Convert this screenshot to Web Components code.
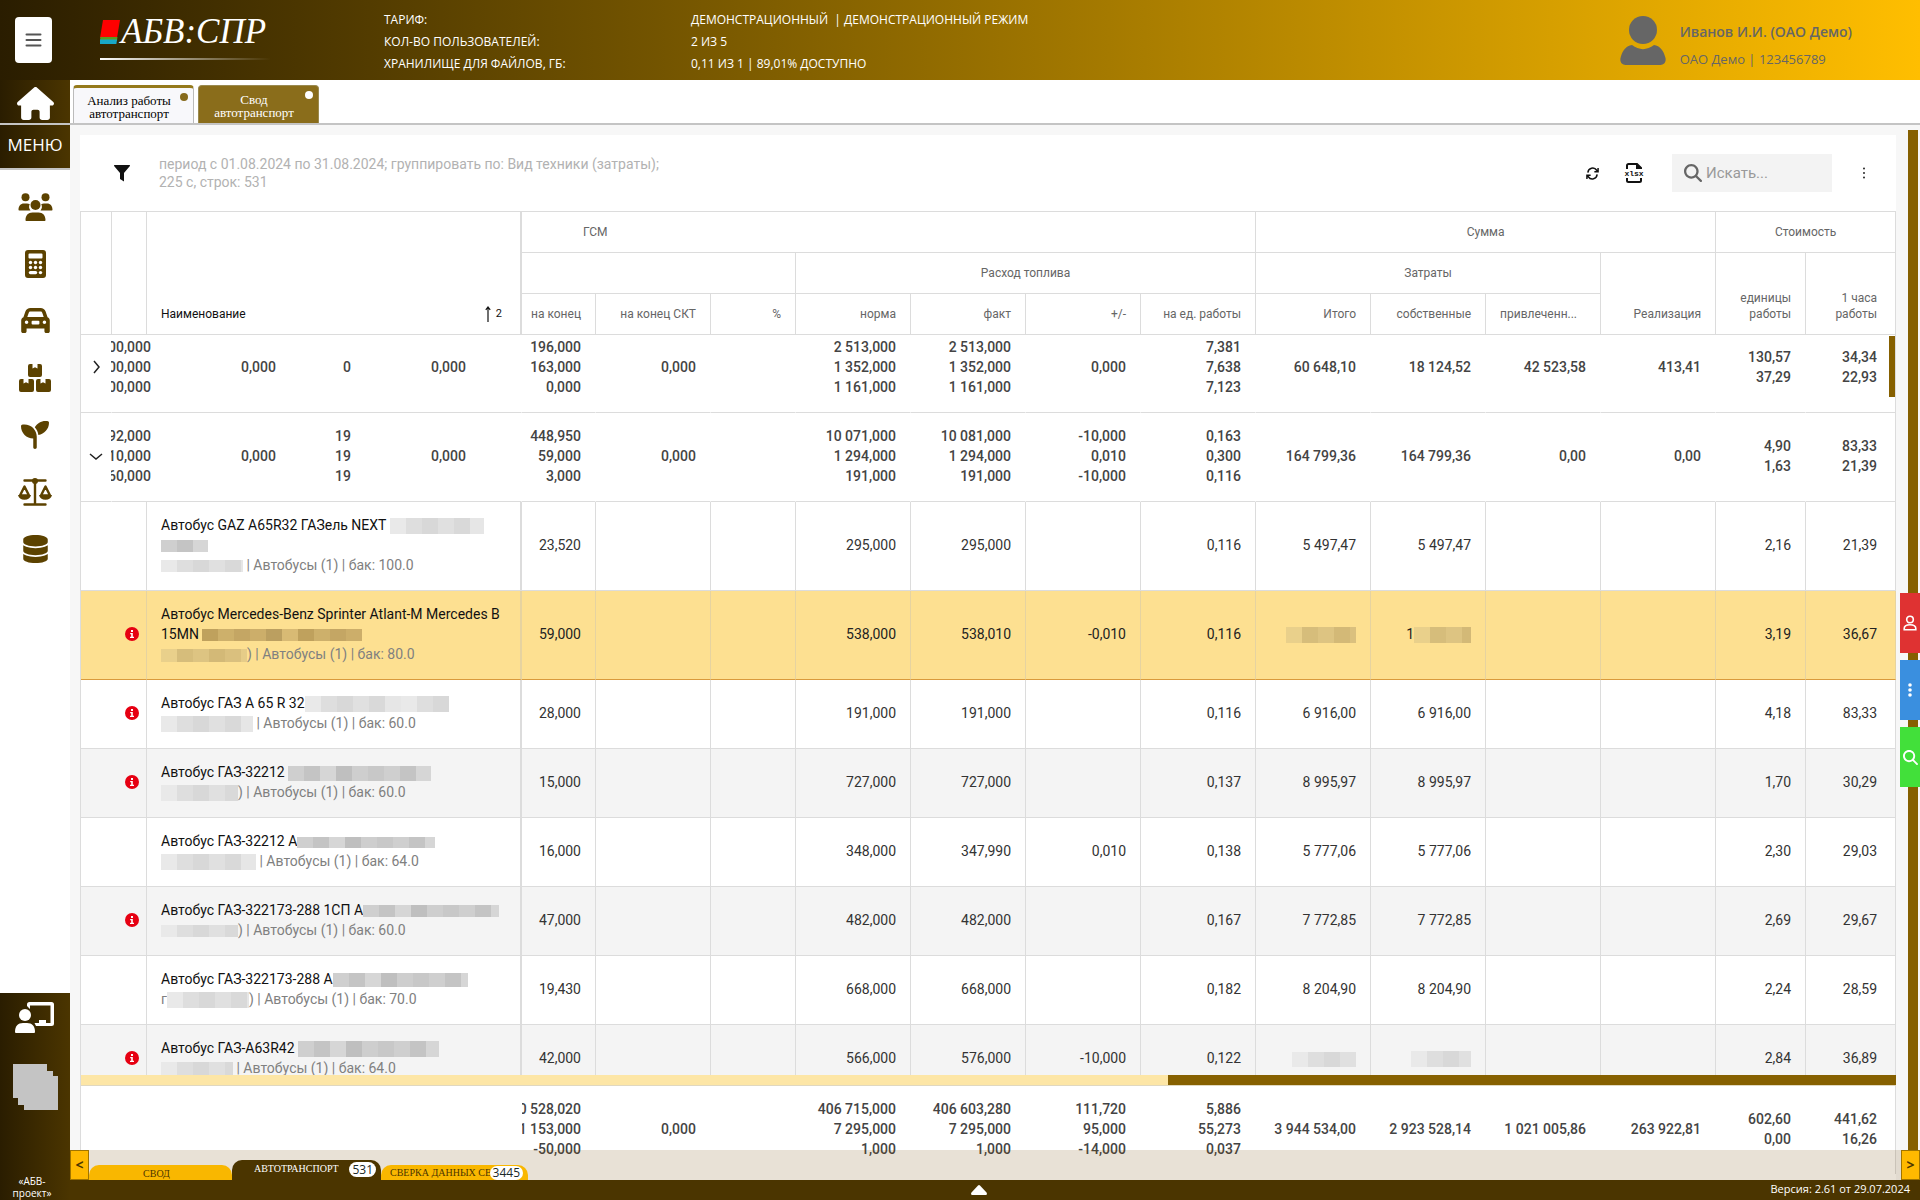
<!DOCTYPE html>
<html lang="ru">
<head>
<meta charset="utf-8">
<title>АБВ:СПР</title>
<style>
html,body{margin:0;height:100%}
body{font-family:Roboto,"Noto Sans",sans-serif;color:#333;background:#fff;overflow:hidden}
</style>
</head>
<body>
<app-shell>
  <app-header slot="header"></app-header>
  <side-bar slot="side"></side-bar>
  <page-tabs slot="tabs"></page-tabs>
  <report-card slot="content"></report-card>
  <sheet-tabs slot="sheets"></sheet-tabs>
  <status-bar slot="status"></status-bar>
  <quick-actions slot="actions"></quick-actions>
</app-shell>
<script>
const BASE = ':host,*{box-sizing:border-box}button{font:inherit;color:inherit;border:0;padding:0;margin:0;background:none;cursor:pointer}a{color:inherit;text-decoration:none}';
const element = (name, css, html, ready) => customElements.define(name, class extends HTMLElement {
  constructor() {
    super();
    const root = this.attachShadow({ mode: 'open' });
    root.innerHTML = `<style>${BASE}${css}</style>${html}`;
    if (ready) ready(root, this);
  }
});

const ICONS = {
  home: ['0 0 576 512', '<path d="M575.8 255.5c0 18-15 32.1-32 32.1h-32l.7 160.2V472c0 22.1-17.9 40-40 40H392c-22.1 0-40-17.9-40-40V384c0-17.7-14.3-32-32-32H256c-17.7 0-32 14.3-32 32v88c0 22.1-17.9 40-40 40H104c-22.1 0-40-17.9-40-40V287.6H32c-18 0-32-14-32-32.1c0-9 3-17 10-24L266.4 8c7-7 15-8 22-8s15 2 21 7L564.8 231.5c8 7 12 15 11 24z"/>'],
  people: ['0 0 34 28', '<circle cx="7" cy="4.200" r="4"/><circle cx="27" cy="4.200" r="4"/><circle cx="17" cy="12" r="5"/><path d="M0 17c0-4 2-6.500 5.500-6.500h3c1 0 2 .3 2.800.8C10 13.500 10.500 15.500 12 17.500H.7c-.4 0-.7-.2-.7-.5zM34 17c0-4-2-6.500-5.500-6.500h-3c-1 0-2 .3-2.800.8 1.300 2.200.8 4.200-.7 6.200h11.300c.4 0 .7-.2.7-.5zM7 27c0-4.500 2.500-7.500 7-7.500h6c4.500 0 7 3 7 7.500 0 .6-.4 1-1 1H8c-.6 0-1-.4-1-1z"/>'],
  calc: ['0 0 21 28', '<path fill-rule="evenodd" d="M3 0h15a3 3 0 0 1 3 3v22a3 3 0 0 1-3 3H3a3 3 0 0 1-3-3V3a3 3 0 0 1 3-3zM4.500 3.500a1 1 0 0 0-1 1v3a1 1 0 0 0 1 1h12a1 1 0 0 0 1-1v-3a1 1 0 0 0-1-1z"/><g fill="#fff"><circle cx="5.500" cy="12.500" r="1.700"/><circle cx="10.500" cy="12.500" r="1.700"/><circle cx="15.500" cy="12.500" r="1.700"/><circle cx="5.500" cy="17.500" r="1.700"/><circle cx="10.500" cy="17.500" r="1.700"/><circle cx="15.500" cy="17.500" r="1.700"/><rect x="3.800" y="21" width="8.400" height="3.200" rx="1.600"/><circle cx="15.500" cy="22.600" r="1.700"/></g>'],
  car: ['0 32 512 448', '<path d="M135.200 117.400L109.100 192H402.900l-26.100-74.600C372.300 104.600 360.200 96 346.600 96H165.400c-13.600 0-25.700 8.600-30.200 21.400zM39.600 196.800L74.800 96.300C88.300 57.800 124.600 32 165.400 32H346.600c40.800 0 77.100 25.800 90.600 64.300l35.200 100.500c23.200 9.600 39.600 32.500 39.600 59.200V448c0 17.700-14.300 32-32 32H448c-17.700 0-32-14.300-32-32V400H96v48c0 17.700-14.300 32-32 32H32c-17.700 0-32-14.300-32-32V256c0-26.700 16.400-49.600 39.600-59.200zM128 288a32 32 0 1 0-64 0 32 32 0 1 0 64 0zm288 32a32 32 0 1 0 0-64 32 32 0 1 0 0 64z"/><rect x="186" y="262" width="140" height="66" rx="18" fill="#fff"/>'],
  boxes: ['0 0 32 28', '<path d="M11 0h2.500v4.500l2.500-1.200 2.500 1.200V0H21a2 2 0 0 1 2 2v9a2 2 0 0 1-2 2H11a2 2 0 0 1-2-2V2a2 2 0 0 1 2-2zM2 15h2.500v4.500L7 18.300l2.500 1.200V15H13a2 2 0 0 1 2 2v9a2 2 0 0 1-2 2H2a2 2 0 0 1-2-2v-9a2 2 0 0 1 2-2zM19 15h2.500v4.500l2.500-1.200 2.500 1.200V15H30a2 2 0 0 1 2 2v9a2 2 0 0 1-2 2H19a2 2 0 0 1-2-2v-9a2 2 0 0 1 2-2z"/>'],
  plant: ['0 0 512 512', '<path d="M512 32c0 113.600-84.600 207.500-194.200 222c-7.100-53.400-30.600-101.600-65.300-139.300C290.800 46.300 364 0 448 0h32c17.700 0 32 14.300 32 32zM0 96C0 78.300 14.300 64 32 64H64c123.700 0 224 100.300 224 224V480c0 17.700-14.300 32-32 32s-32-14.300-32-32V320C100.300 320 0 219.700 0 96z"/>'],
  scales: ['0 0 34 28', '<g fill="none" stroke="currentColor" stroke-width="2.400" stroke-linecap="round" stroke-linejoin="round"><path d="M6.500 2.500h21M17 3v23M6.500 26.500h21M6.500 8.500L2 17.500h9zM27.500 8.500L23 17.500h9z"/></g><circle cx="17" cy="3" r="3"/><path d="M0 17h13c-.6 3-3 4.800-6.500 4.800S.6 20 0 17zM21 17h13c-.6 3-3 4.800-6.500 4.800S21.600 20 21 17z"/>'],
  db: ['0 0 448 512', '<path d="M448 80v48c0 44.200-100.300 80-224 80S0 172.200 0 128V80C0 35.800 100.300 0 224 0S448 35.800 448 80zM393.200 214.700c20.800-7.400 39.900-16.900 54.800-28.600V288c0 44.200-100.300 80-224 80S0 332.200 0 288V186.100c14.900 11.800 34 21.200 54.800 28.600C99.700 230.700 159.500 240 224 240s124.300-9.300 169.200-25.300zM0 346.100c14.900 11.800 34 21.200 54.800 28.600C99.700 390.700 159.500 400 224 400s124.300-9.300 169.200-25.300c20.800-7.400 39.900-16.900 54.800-28.600V432c0 44.200-100.300 80-224 80S0 476.200 0 432V346.100z"/>'],
  teach: ['0 0 40 32', '<path d="M12 5V3.500A2.500 2.500 0 0 1 14.500 1h22A2.500 2.500 0 0 1 39 3.500v19a2.500 2.500 0 0 1-2.500 2.500H21l-1.500-3H24v-3h7v3h4.500V4.500H15V8z"/><circle cx="10" cy="14" r="6"/><path d="M0 31c0-6 3-9 8-9h4c5 0 8 3 8 9a1 1 0 0 1-1 1H1a1 1 0 0 1-1-1z"/>'],
  stack: ['0 0 45 46', '<path d="M0 0h34v7h6v5h5v34H11v-5H5v-7H0z"/>'],
  user: ['0 0 46 49', '<ellipse cx="23" cy="14" rx="14" ry="14"/><path d="M12 29c7 5.500 15 5.500 22 0 6 1 9.500 5 11.500 13 .8 4-1.500 7-5 7h-35c-3.500 0-5.800-3-5-7C2.500 34 6 30 12 29z"/>'],
  burger: ['0 0 16 14', '<path d="M1 1.500h14M1 7h14M1 12.500h14" stroke="currentColor" stroke-width="2" stroke-linecap="round"/>'],
  filter: ['0 0 16 17', '<path d="M.5 0h15c.5 0 .6.500.4.900L10 8v8.500L6 14V8L.1.900C-.1.500 0 0 .5 0z"/>'],
  refresh: ['0 0 14 14', '<path d="M2 6a5.200 5.200 0 0 1 9.500-2.500L13 5M12 8a5.200 5.200 0 0 1-9.500 2.500L1 9M13 1v4H9M1 13V9h4" fill="none" stroke="currentColor" stroke-width="1.600"/>'],
  xlsx: ['0 0 20 20', '<path d="M3 6V2.500A1.500 1.500 0 0 1 4.500 1H13l4 4v1M3 15v2.500A1.500 1.500 0 0 0 4.500 19h11a1.500 1.500 0 0 0 1.500-1.500V15M13 1v4h4" fill="none" stroke="currentColor" stroke-width="2"/><text x="10" y="13" text-anchor="middle" font-family="Liberation Mono" font-weight="700" font-size="8">xlsx</text>'],
  search: ['0 0 512 512', '<path d="M416 208c0 45.900-14.900 88.300-40 122.700L502.600 457.400c12.500 12.500 12.500 32.800 0 45.300s-32.800 12.500-45.300 0L330.700 376c-34.400 25.200-76.800 40-122.700 40C93.100 416 0 322.900 0 208S93.100 0 208 0S416 93.100 416 208zM208 352a144 144 0 1 0 0-288 144 144 0 1 0 0 288z"/>'],
  kebab: ['0 0 4 14', '<circle cx="2" cy="2.500" r=".9"/><circle cx="2" cy="7" r=".9"/><circle cx="2" cy="11.500" r=".9"/>'],
  dots: ['0 0 4 14', '<circle cx="2" cy="2" r="1.800"/><circle cx="2" cy="7" r="1.800"/><circle cx="2" cy="12" r="1.800"/>'],
  person: ['0 0 14 16', '<g fill="none" stroke="currentColor" stroke-width="1.600"><circle cx="7" cy="4.500" r="3.300"/><path d="M1.200 14.800v-1.300c0-2.500 1.800-3.700 5.800-3.700s5.800 1.200 5.800 3.700v1.300z"/></g>'],
  right: ['0 0 14 14', '<path d="M5 1l5 6-5 6" fill="none" stroke="currentColor" stroke-width="1.500"/>'],
  down: ['0 0 14 14', '<path d="M1 5l6 5 6-5" fill="none" stroke="currentColor" stroke-width="1.500"/>'],
  info: ['0 0 14 14', '<circle cx="7" cy="7" r="7"/><path d="M6 3h2v2H6zM5.200 6h2.600v3.700H9V11H5V9.700h1.200V7.200h-1z" fill="#fff"/>'],
  sort: ['0 0 6 16', '<path d="M3 16V2M.8 3.800L3 1l2.200 2.800" fill="none" stroke="currentColor" stroke-width="1.200"/>'],
  up: ['0 0 16 10', '<path d="M7 .5a1.500 1.500 0 0 1 2 0l6.500 7c.8 1 .4 2.500-1 2.500h-13C.1 10-.3 8.500.5 7.500z"/>'],
  logo: ['0 0 20 24', '<path d="M3 0h17l-3 18H0z" fill="#f00"/><path d="M.4 17h17l-.4 4H0z" fill="#5a9a20"/><path d="M0 19.500h17l-.6 4.500H0z" fill="#18a8c8"/>']
};
customElements.define('svg-icon', class extends HTMLElement {
  connectedCallback() {
    if (this.shadowRoot) return;
    const [box, body] = ICONS[this.getAttribute('name')];
    this.attachShadow({ mode: 'open' }).innerHTML =
      `<style>:host{display:inline-block;flex:none}svg{display:block;width:100%;height:100%;fill:currentColor}</style><svg viewBox="${box}" aria-hidden="true">${body}</svg>`;
    this.style.width = this.getAttribute('w') + 'px';
    this.style.height = this.getAttribute('h') + 'px';
  }
});
const icon = (n, w, h = w) => `<svg-icon name="${n}" w="${w}" h="${h}"></svg-icon>`;

/* A mosaic strip that hides private data inside a line of text. */
const TONES = {
  light: ['#e9e9e9', '#dedede', '#d8d8d8', '#e0e0e0', '#d9d9d9', '#e6e6e6'],
  dark: ['#cfcfcf', '#c4c4c4', '#d6d6d6', '#bfbfbf', '#cecece', '#c8c8c8'],
  sand: ['#e9d08b', '#d6bd7b', '#ddc482', '#d3b977', '#dac07e', '#e6cc88'],
  brown: ['#bfa15d', '#cdb06b', '#c4a664', '#ccae6a', '#bb9f60', '#d8ba74']
};
customElements.define('hidden-data', class extends HTMLElement {
  connectedCallback() {
    if (this.shadowRoot) return;
    const tones = TONES[this.getAttribute('tone') || 'light'];
    const stops = tones.map((c, i) => `${c} ${i * 16}px ${(i + 1) * 16}px`).join(',');
    this.attachShadow({ mode: 'open' }).innerHTML =
      `<style>:host{display:inline-block;vertical-align:middle;background:repeating-linear-gradient(90deg,${stops})}</style>`;
    this.style.width = this.getAttribute('w') + 'px';
    this.style.height = this.getAttribute('h') + 'px';
  }
});
const mask = (w, h, tone = 'light') => `<hidden-data w="${w}" h="${h}" tone="${tone}"></hidden-data>`;

element('app-shell', `
:host{display:grid;grid-template:80px 45px minmax(0,1fr) 20px / 70px minmax(0,1fr);height:100vh;position:relative}
.header{grid-area:1/1/2/3}.side{grid-area:2/1/5/2}.tabs{grid-area:2/2/3/3}
.main{grid-area:3/2/4/3;background:#f7f7f7;position:relative;display:flex;padding:10px 24px 0 10px;min-height:0}
.main ::slotted(report-card){flex:1;min-width:0}
.scroll{position:absolute;right:2px;top:5px;bottom:30px;width:10px;background:#866000}
.sheets{position:absolute;left:0;right:0;bottom:0}
.actions{position:absolute;right:0;top:468px}
.status{grid-area:4/2/5/3}`,
`<div class="header"><slot name="header"></slot></div>
<div class="side"><slot name="side"></slot></div>
<div class="tabs"><slot name="tabs"></slot></div>
<main class="main"><slot name="content"></slot><div class="scroll"></div><div class="sheets"><slot name="sheets"></slot></div><div class="actions"><slot name="actions"></slot></div></main>
<div class="status"><slot name="status"></slot></div>`);

element('app-header', `
:host{display:flex;height:80px;align-items:center;background:linear-gradient(90deg,#2a1d00,#ffbe00);color:#fff;font-family:"Open Sans","Noto Sans",sans-serif}
.burger{width:37px;height:46px;margin-left:15px;border-radius:4px;background:#fff;color:#555;display:flex;align-items:center;justify-content:center}
.logo{margin-left:48px;width:170px;height:48px;border-bottom:2px solid;border-image:linear-gradient(90deg,#fff,transparent) 1;display:flex;align-items:flex-start;gap:1px;margin-bottom:8px;padding-top:2px;font:italic 35px/36px "Liberation Serif",serif}
.logo svg-icon{margin-top:6px}
dl{margin:4px 0 0 114px;display:grid;grid-template-columns:307px auto;font-size:12px;line-height:22px;font-weight:500}
dd{margin:0;white-space:pre}
.user{margin-left:auto;margin-right:68px;display:flex;gap:14px;color:#666;align-items:center}
.user div{padding-top:10px}
.user b{display:block;font-size:14px;line-height:28px;font-weight:600}.user span{display:block;font-size:13px;line-height:26px}`,
`<button class="burger" aria-label="Меню">${icon('burger', 17, 14)}</button>
<a class="logo" href="#">${icon('logo', 20, 24)}АБВ:СПР</a>
<dl><dt>ТАРИФ:</dt><dd>ДЕМОНСТРАЦИОННЫЙ  | ДЕМОНСТРАЦИОННЫЙ РЕЖИМ</dd><dt>КОЛ-ВО ПОЛЬЗОВАТЕЛЕЙ:</dt><dd>2 ИЗ 5</dd><dt>ХРАНИЛИЩЕ ДЛЯ ФАЙЛОВ, ГБ:</dt><dd>0,11 ИЗ 1 | 89,01% ДОСТУПНО</dd></dl>
<div class="user">${icon('user', 46, 49)}<div><b>Иванов И.И. (ОАО Демо)</b><span>ОАО Демо | 123456789</span></div></div>`);

element('side-bar', `
:host{display:flex;flex-direction:column;height:100%;background:#fff;color:#5c4200;font-family:"Open Sans","Noto Sans",sans-serif;--dark:linear-gradient(90deg,#2a1d00,#4b3500)}
.home,.menu{background:var(--dark);color:#fff;border-bottom:2px solid #c4c4c4;display:flex;align-items:center;justify-content:center;flex:none}
.home{height:45px;padding-top:3px}.menu{height:45px;font-size:17px;padding-bottom:5px}
nav{display:flex;flex-direction:column;padding-top:8px}
nav a{height:57px;display:flex;align-items:center;justify-content:center}
.foot{margin-top:auto;height:207px;background:var(--dark);color:#fff;display:flex;flex-direction:column;align-items:center;padding-top:8px}
.foot button{display:flex;color:#c4c4c4;margin-top:31px}.foot button:first-child{color:#fff;margin:0}
.foot p{margin:auto 0 1px;font-size:10px;line-height:12px;text-align:center;padding-right:6px}`,
`<a class="home" href="#" aria-label="Главная">${icon('home', 37, 33)}</a>
<div class="menu">МЕНЮ</div>
<nav>${[['people', 35, 28, 'Персонал'], ['calc', 21, 28, 'Учёт'], ['car', 29, 25, 'Транспорт'], ['boxes', 32, 28, 'Склад'], ['plant', 28, 28, 'Растениеводство'], ['scales', 34, 28, 'Весовая'], ['db', 25, 28, 'Данные']].map(([n, w, h, t]) => `<a href="#" aria-label="${t}">${icon(n, w, h)}</a>`).join('')}</nav>
<div class="foot"><button aria-label="Обучение">${icon('teach', 40, 32)}</button><button aria-label="Окна">${icon('stack', 45, 46)}</button><p>«АБВ-<br>проект»</p></div>`);

element('page-tabs', `
:host{display:flex;gap:4px;height:45px;padding:5px 0 0 3px;background:#fff;border-bottom:2px solid #c4c4c4;font:13px/13px "Liberation Serif",serif}
button{width:121px;height:38px;border-radius:4px 4px 0 0;position:relative;padding:3px 9px 0 0;background:#f8f8fb;color:#000;border:1px solid #bbb;border-bottom:0;border-top:3px solid #957a1c}
button.on{background:#8a6d1b;color:#fff;border:1px solid #9a8a50;border-bottom:0}
i{position:absolute;right:5px;top:5px;width:8px;height:8px;border-radius:4px;background:#866a1c}
.on i{background:#fff}`,
`<button>Анализ работы<br>автотранспорт<i></i></button><button class="on">Свод<br>автотранспорт<i></i></button>`);

element('report-card', `
:host{display:flex;flex-direction:column;background:#fff;min-height:0}
.bar{height:76px;display:flex;align-items:center;color:#111;padding:0 30px 0 34px;flex:none}
p{margin:0 auto 0 29px;font-size:14px;line-height:18px;color:#b2b2b2}
button{display:flex}.x{margin:0 28px 0 25px}
label{width:160px;height:38px;background:#f3f3f3;display:flex;align-items:center;gap:4px;padding-left:12px;margin-right:30px;color:#666}
input{min-width:0;flex:1;border:0;background:none;font:15px Roboto,sans-serif;padding:0;outline:0}
input::placeholder{color:#999;opacity:1}
data-grid{flex:1;min-height:0}`,
`<div class="bar"><button aria-label="Фильтр">${icon('filter', 16, 17)}</button>
<p>период с 01.08.2024 по 31.08.2024; группировать по: Вид техники (затраты);<br>225 с, строк: 531</p>
<button aria-label="Обновить">${icon('refresh', 13)}</button><button class="x" aria-label="Выгрузить">${icon('xlsx', 20)}</button>
<label>${icon('search', 18)}<input type="text" placeholder="Искать..." aria-label="Поиск"></label><button aria-label="Ещё">${icon('kebab', 4, 14)}</button></div>
<data-grid></data-grid>`);

const WIDTHS = [31, 35, 375, 74, 115, 85, 115, 115, 115, 115, 115, 115, 115, 115, 90, 90];
const COLS = `<colgroup>${WIDTHS.map(w => `<col style="width:${w}px">`).join('')}</colgroup>`;
const lines = s => s.replace(/\//g, '<br>');
const cell = v => `<td>${v.startsWith('<') || v.includes('hidden') ? v : lines(v)}</td>`;
const nums = list => list.map(cell).join('');
const GROUPS = [
  { open: false, back: ['00,000/00,000/00,000', '0,000', '0', '0,000'], v: ['196,000/163,000/0,000', '0,000', '', '2 513,000/1 352,000/1 161,000', '2 513,000/1 352,000/1 161,000', '0,000', '7,381/7,638/7,123', '60 648,10', '18 124,52', '42 523,58', '413,41', '130,57/37,29', '34,34/22,93'] },
  { open: true, back: ['92,000/10,000/60,000', '0,000', '19/19/19', '0,000'], v: ['448,950/59,000/3,000', '0,000', '', '10 071,000/1 294,000/191,000', '10 081,000/1 294,000/191,000', '-10,000/0,010/-10,000', '0,163/0,300/0,116', '164 799,36', '164 799,36', '0,00', '0,00', '4,90/1,63', '83,33/21,39'] }
];
const ROWS = [
  { cls: 'tall', name: `Автобус GAZ A65R32 ГАЗель NEXT ${mask(94, 16)}<br>${mask(47, 12, 'dark')}`, sub: `${mask(82, 12)} | Автобусы (1) | бак: 100.0`, v: ['23,520', '', '', '295,000', '295,000', '', '0,116', '5 497,47', '5 497,47', '', '', '2,16', '21,39'] },
  { cls: 'tall sel', info: 1, name: `Автобус Mercedes-Benz Sprinter Atlant-M Mercedes B<br>15MN ${mask(160, 12, 'brown')}`, sub: `${mask(86, 13, 'sand')}) | Автобусы (1) | бак: 80.0`, v: ['59,000', '', '', '538,000', '538,010', '-0,010', '0,116', mask(70, 16, 'sand'), '1' + mask(57, 16, 'sand'), '', '', '3,19', '36,67'] },
  { info: 1, name: `Автобус ГАЗ А 65 R 32${mask(144, 16)}`, sub: `${mask(92, 16)} | Автобусы (1) | бак: 60.0`, v: ['28,000', '', '', '191,000', '191,000', '', '0,116', '6 916,00', '6 916,00', '', '', '4,18', '83,33'] },
  { cls: 'alt', info: 1, name: `Автобус ГАЗ-32212 ${mask(143, 15, 'dark')}`, sub: `${mask(77, 16)}) | Автобусы (1) | бак: 60.0`, v: ['15,000', '', '', '727,000', '727,000', '', '0,137', '8 995,97', '8 995,97', '', '', '1,70', '30,29'] },
  { name: `Автобус ГАЗ-32212 А${mask(138, 11, 'dark')}`, sub: `${mask(95, 16)} | Автобусы (1) | бак: 64.0`, v: ['16,000', '', '', '348,000', '347,990', '0,010', '0,138', '5 777,06', '5 777,06', '', '', '2,30', '29,03'] },
  { cls: 'alt', info: 1, name: `Автобус ГАЗ-322173-288 1СП А${mask(136, 12, 'dark')}`, sub: `${mask(77, 12)}) | Автобусы (1) | бак: 60.0`, v: ['47,000', '', '', '482,000', '482,000', '', '0,167', '7 772,85', '7 772,85', '', '', '2,69', '29,67'] },
  { name: `Автобус ГАЗ-322173-288 А${mask(135, 14, 'dark')}`, sub: `г${mask(82, 16)}) | Автобусы (1) | бак: 70.0`, v: ['19,430', '', '', '668,000', '668,000', '', '0,182', '8 204,90', '8 204,90', '', '', '2,24', '28,59'] },
  { cls: 'alt', info: 1, name: `Автобус ГАЗ-А63R42 ${mask(141, 16, 'dark')}`, sub: `${mask(72, 15)} | Автобусы (1) | бак: 64.0`, v: ['42,000', '', '', '566,000', '576,000', '-10,000', '0,122', mask(64, 15), mask(60, 16), '', '', '2,84', '36,89'] }
];
const TOTAL = ['0 528,020/1 153,000/-50,000', '0,000', '', '406 715,000/7 295,000/1,000', '406 603,280/7 295,000/1,000', '111,720/95,000/-14,000', '5,886/55,273/0,037', '3 944 534,00', '2 923 528,14', '1 021 005,86', '263 922,81', '602,60/0,00', '441,62/16,26'];

element('data-grid', `
:host{display:flex;flex-direction:column;border-left:1px solid #dcdcdc;font-size:14px;line-height:20px;padding-bottom:6px}
table{width:100%;table-layout:fixed;border-collapse:separate;border-spacing:0;flex:none}
.head{border-top:1px solid #dcdcdc;font-size:12px;line-height:16px;color:#666}
th{height:41px;font-weight:400;padding:0 14px 12px 0;vertical-align:bottom;text-align:right;border-right:1px solid #dcdcdc;border-bottom:1px solid #dcdcdc;white-space:nowrap}
th.c{text-align:center;padding-right:0}th.gsm{text-align:left;padding-left:61px}th.cut{text-align:left;padding:0 0 12px 14px}
th.name{text-align:left;color:#111;padding-left:14px;border-right-width:2px;white-space:normal}
th.name div{display:flex;justify-content:space-between;align-items:center}th.name span{display:flex;align-items:center;gap:5px;padding-right:4px;font-size:11px}
th.last{padding-right:18px}
.view{flex:1;min-height:0;overflow:hidden;position:relative}
td{height:69px;padding:0 14px 2px 0;text-align:right;border-right:1px solid #dcdcdc;border-bottom:1px solid #dcdcdc;vertical-align:middle;white-space:nowrap}
td:last-child{padding-right:18px}
.tall td,.group td{height:89px}
.group td{border-right-color:transparent;font-weight:500;color:#444}.group td:last-child{border-right-color:#dcdcdc}
.alt td{background:#f4f4f4}
.sel td{background:#fde091;border-bottom-color:#d99a3c;color:#222;border-right-color:#e6d3a0}
td.i,.sel td.i{color:#e60012;padding-right:7px}td.i svg-icon,td.t svg-icon{display:block;margin-left:auto}
.group td.t{padding-right:8px;color:#222}
td.n{text-align:left;padding:0 0 2px 14px;color:#111;border-right-width:2px}td.n small{display:block;font-size:14px;color:#808080}
td.b{padding:0 0 2px}td.b div{display:grid;grid-template-columns:53px 125px 75px 115px;align-items:center}td.b span{overflow:hidden;display:flex;justify-content:flex-end;padding-right:14px}
td.b span:first-child{margin-left:-1px}
.thumb{position:absolute;right:1px;top:1px;width:6px;height:61px;background:#866000}
.hs{height:11px;flex:none;background:#fde6a6;border-bottom:1px solid #e0d8c0;display:flex;justify-content:flex-end}.hs i{width:728px;background:#866000}
.total td{height:88px;border:0;border-right:1px solid transparent;font-weight:500;color:#444;overflow:hidden}
.total td div{display:flex;justify-content:flex-end}
.total td:last-child{border-right-color:#dcdcdc}`,
`<table class="head">${COLS}<thead>
<tr><th rowspan="3"></th><th rowspan="3"></th><th rowspan="3" class="name"><div>Наименование<span>${icon('sort', 6, 16)}2</span></div></th><th colspan="7" class="gsm">ГСМ</th><th colspan="4" class="c">Сумма</th><th colspan="2" class="c">Стоимость</th></tr>
<tr><th colspan="3"></th><th colspan="4" class="c">Расход топлива</th><th colspan="3" class="c">Затраты</th><th rowspan="2">Реализация</th><th rowspan="2">единицы<br>работы</th><th rowspan="2" class="last">1 часа<br>работы</th></tr>
<tr><th>на конец</th><th>на конец СКТ</th><th>%</th><th>норма</th><th>факт</th><th>+/-</th><th>на ед. работы</th><th>Итого</th><th>собственные</th><th class="cut">привлеченн...</th></tr></thead></table>
<div class="view"><table>${COLS}<tbody>
${GROUPS.map(g => `<tr class="group"><td class="t">${icon(g.open ? 'down' : 'right', 14)}</td><td class="b" colspan="2"><div>${g.back.map(b => `<span>${lines(b)}</span>`).join('')}</div></td>${nums(g.v)}</tr>`).join('')}
${ROWS.map(r => `<tr class="${r.cls || ''}"><td class="i" colspan="2">${r.info ? icon('info', 14) : ''}</td><td class="n">${r.name}<small>${r.sub}</small></td>${nums(r.v)}</tr>`).join('')}
</tbody></table></div>
<div class="hs"><i></i></div>
<table class="total">${COLS}<tbody><tr><td></td><td></td><td></td>${TOTAL.map(v => `<td><div>${lines(v)}</div></td>`).join('')}</tr></tbody></table>`,
root => {
  const view = root.querySelector('.view');
  const thumb = document.createElement('div');
  thumb.className = 'thumb';
  view.append(thumb);
  requestAnimationFrame(() => { view.scrollTop = 11; thumb.style.top = view.scrollTop + 1 + 'px'; });
});

element('sheet-tabs', `
:host{display:flex;height:30px;align-items:flex-end;background:rgba(111,67,0,.16);font:10px/20px "Liberation Serif",serif;color:#4b3500}
.nav{width:19px;height:30px;background:#ffb900;border:1px solid #a07400;font:700 14px/26px "Open Sans",sans-serif}
.nav:last-child{margin-left:auto}
.tab{height:15px;background:#f9b700;border-radius:10px 10px 0 0;width:147px;line-height:15px;white-space:nowrap;display:flex;justify-content:space-between;padding:1px 5px 0 9px}
.first{width:143px;justify-content:center;padding-right:17px}
.on{width:149px;height:20px;background:#4b3500;color:#fff;padding:2px 5px 0 22px}
.tab span{overflow:hidden;height:14px;line-height:14px}
b{flex:none;background:#fff;color:#1c2a2a;border-radius:8px;font:12px/15px "Open Sans",sans-serif;height:15px;padding:0 3px}
.last b{height:14px;line-height:14px}`,
`<button class="nav" aria-label="Назад">&lt;</button><button class="tab first">СВОД</button><button class="tab on"><span>АВТОТРАНСПОРТ</span><b>531</b></button><button class="tab last"><span>СВЕРКА ДАННЫХ СВ</span><b>3445</b></button><button class="nav" aria-label="Вперёд">&gt;</button>`);

element('status-bar', `
:host{display:flex;height:20px;align-items:center;justify-content:center;padding-right:32px;position:relative;background:#4b3500;color:#fff;font:11px/20px "Open Sans","Noto Sans",sans-serif}
span{position:absolute;right:10px;top:-1px}button{display:flex}`,
`<button aria-label="Развернуть">${icon('up', 16, 10)}</button><span>Версия: 2.61 от 29.07.2024</span>`);

element('quick-actions', `
:host{display:flex;flex-direction:column;gap:7px}
button{width:20px;height:60px;display:flex;align-items:center;justify-content:center;color:#fff;background:#df3232}
button:nth-of-type(2){background:#3a8fdf}button:nth-of-type(3){background:#42e03a}`,
`<button aria-label="Пользователи">${icon('person', 14, 16)}</button><button aria-label="Действия">${icon('dots', 4, 14)}</button><button aria-label="Найти">${icon('search', 15)}</button>`);
</script>
</body>
</html>
